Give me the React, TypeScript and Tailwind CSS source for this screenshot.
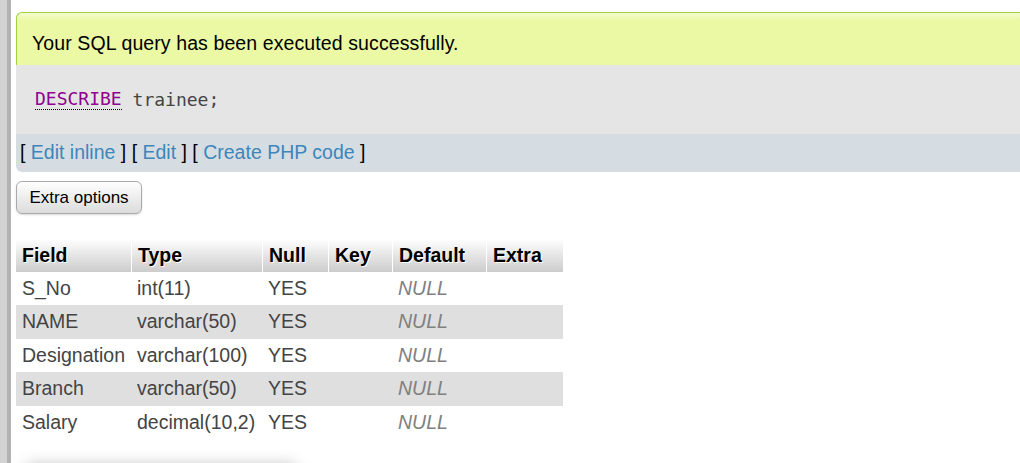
import React from 'react'

type Column = { name: string; type: string; nul: string; key: string; def: string; extra: string }

const columns: Column[] = [
  { name: 'S_No', type: 'int(11)', nul: 'YES', key: '', def: 'NULL', extra: '' },
  { name: 'NAME', type: 'varchar(50)', nul: 'YES', key: '', def: 'NULL', extra: '' },
  { name: 'Designation', type: 'varchar(100)', nul: 'YES', key: '', def: 'NULL', extra: '' },
  { name: 'Branch', type: 'varchar(50)', nul: 'YES', key: '', def: 'NULL', extra: '' },
  { name: 'Salary', type: 'decimal(10,2)', nul: 'YES', key: '', def: 'NULL', extra: '' },
]

const headers = ['Field', 'Type', 'Null', 'Key', 'Default', 'Extra']

const gridCols = 'grid grid-cols-[115px_131px_66px_64px_94px_77px]'

const App = () => {
  return (
    <div
      className="flex h-[463px] w-full overflow-hidden bg-white text-[19.5px]"
      style={{ fontFamily: '"Liberation Sans", Arial, sans-serif' }}
    >
      {/* left frame border */}
      <div className="w-[7px] shrink-0 bg-[#d3d3d3]" />
      <div className="w-[4px] shrink-0 bg-[#b2b2b2]" />

      <div className="flex-1 min-w-0 pl-[5px] pt-[12px]">
        {/* result message box */}
        <div className="-mr-[20px]">
          <div className="rounded-tl-[6px] border-l border-t border-[#a1d13f] bg-[linear-gradient(to_bottom,#f5fcd0,#ebf8a4_14%)] pl-[15px] pt-[19px] pb-[11px] leading-[22px] tracking-[0.1px] text-black">
            Your SQL query has been executed successfully.
          </div>
          <div className="flex h-[69px] items-center bg-[#e5e5e5] pl-[19px] text-[18px]" style={{ fontFamily: '"DejaVu Sans Mono", monospace' }}>
            <span className="border-b border-dotted border-black leading-[20px] text-[#900090]">DESCRIBE</span>
            <span className="whitespace-pre leading-[20px] text-[#444]"> trainee;</span>
          </div>
          <div className="flex h-[38px] items-center rounded-bl-[6px] bg-[#d5dde3] pl-[4px] text-black whitespace-pre">
            [ <a className="text-[#3d86bb]">Edit inline</a> ] [ <a className="text-[#3d86bb]">Edit</a> ] [ <a className="text-[#3d86bb]">Create PHP code</a> ]
          </div>
        </div>

        <button className="mt-[9px] h-[33px] w-[126px] rounded-[6px] border border-[#aaa] bg-gradient-to-b from-white to-[#dcdcdc] text-[17px] text-black shadow-[0_1px_2px_rgba(0,0,0,0.15)]">
          Extra options
        </button>

        {/* structure table */}
        <div className="mt-[25px] w-[547px]">
          <div className={`${gridCols} h-[33px] bg-gradient-to-b from-white to-[#cccccc]`}>
            {headers.map((h, i) => (
              <div
                key={h}
                className={`flex items-center pl-[6px] font-bold text-black [text-shadow:1px_1px_0_#fff] ${i > 0 ? 'border-l border-white' : ''}`}
              >
                {h}
              </div>
            ))}
          </div>
          {columns.map((c, i) => (
            <div key={c.name} className={`${gridCols} h-[33.4px] text-[#444] ${i % 2 === 1 ? 'bg-[#dfdfdf]' : 'bg-white'}`}>
              <div className="flex items-center pl-[6px]">{c.name}</div>
              <div className="flex items-center pl-[6px] whitespace-nowrap">{c.type}</div>
              <div className="flex items-center pl-[6px]">{c.nul}</div>
              <div className="flex items-center pl-[6px]">{c.key}</div>
              <div className="flex items-center pl-[6px] italic text-[#808080]">{c.def}</div>
              <div className="flex items-center pl-[6px]">{c.extra}</div>
            </div>
          ))}
        </div>

        {/* next fieldset, just peeking in at the bottom */}
        <div className="ml-[10px] mt-[27px] h-[40px] w-[270px] rounded-[4px] bg-white shadow-[0_0_16px_rgba(0,0,0,0.3)]" />
      </div>
    </div>
  )
}

export default App
